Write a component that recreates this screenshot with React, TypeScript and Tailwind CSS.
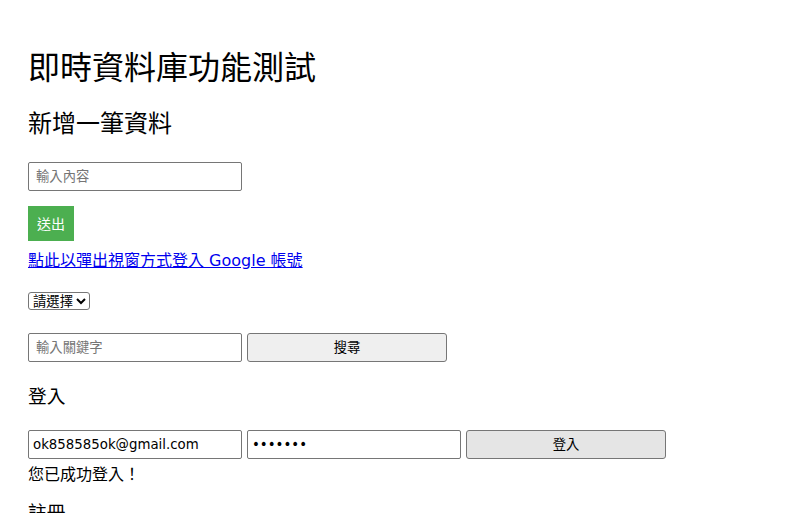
export default function App() {
  return (
    <div className="h-screen overflow-y-scroll bg-white font-['DejaVu_Sans','Noto_Sans_CJK_TC',sans-serif] text-black">
      <div className="px-[28px] pt-[50px] pb-[60px]">
        {/* Title */}
        <h1 className="text-[32px] leading-[37px] font-normal">即時資料庫功能測試</h1>
        <h2 className="mt-[23px] text-[24px] leading-[28px] font-normal">新增一筆資料</h2>

        {/* Add data */}
        <input
          type="text"
          placeholder="輸入內容"
          className="mt-[24px] block h-[29px] w-[214px] rounded-[2px] border border-[#767676] px-[7px] text-[13.33px] leading-[16px] placeholder:text-[#757575]"
        />
        <button className="mt-[15px] block h-[35px] bg-[#4caf50] px-[9px] text-[14px] leading-[16px] text-white">
          送出
        </button>

        <a href="#" className="mt-[10px] block w-fit text-[16px] leading-[19px] text-[#0000ee] underline">
          點此以彈出視窗方式登入 Google 帳號
        </a>

        <select className="mt-[22px] block h-[18px] rounded-[3px] border border-[#767676] text-[13.33px] leading-[16px]">
          <option>請選擇</option>
          <option>選項一</option>
        </select>

        {/* Search */}
        <div className="mt-[23px] flex gap-[5px]">
          <input
            type="text"
            placeholder="輸入關鍵字"
            className="h-[29px] w-[214px] rounded-[2px] border border-[#767676] px-[7px] text-[13.33px] leading-[16px] placeholder:text-[#757575]"
          />
          <button className="h-[29px] w-[200px] rounded-[3px] border border-[#767676] bg-[#efefef] text-[13.33px] leading-[16px]">
            搜尋
          </button>
        </div>

        {/* Login */}
        <h3 className="mt-[24px] text-[18.72px] leading-[22px] font-normal">登入</h3>
        <div className="mt-[22px] flex gap-[5px]">
          <input
            type="email"
            defaultValue="ok858585ok@gmail.com"
            className="h-[29px] w-[214px] rounded-[2px] border border-[#767676] px-[4px] text-[13.33px] leading-[16px]"
          />
          <input
            type="password"
            defaultValue="1234567"
            className="h-[29px] w-[214px] rounded-[2px] border border-[#767676] px-[4px] text-[13.33px] leading-[16px]"
          />
          <button className="h-[29px] w-[200px] rounded-[3px] border border-[#767676] bg-[#e5e5e5] text-[13.33px] leading-[16px]">
            登入
          </button>
        </div>
        <p className="mt-[6px] text-[16px] leading-[19px]">您已成功登入！</p>

        {/* Register */}
        <h3 className="mt-[18px] text-[18.72px] leading-[22px] font-normal">註冊</h3>
        <div className="mt-[23px] flex gap-[5px]">
          <input
            type="email"
            placeholder="電子郵件"
            className="h-[29px] w-[214px] rounded-[2px] border border-[#767676] px-[7px] text-[13.33px] leading-[16px] placeholder:text-[#757575]"
          />
          <input
            type="password"
            placeholder="密碼"
            className="h-[29px] w-[214px] rounded-[2px] border border-[#767676] px-[7px] text-[13.33px] leading-[16px] placeholder:text-[#757575]"
          />
          <button className="h-[29px] w-[200px] rounded-[3px] border border-[#767676] bg-[#efefef] text-[13.33px] leading-[16px]">
            註冊
          </button>
        </div>
      </div>
    </div>
  );
}
